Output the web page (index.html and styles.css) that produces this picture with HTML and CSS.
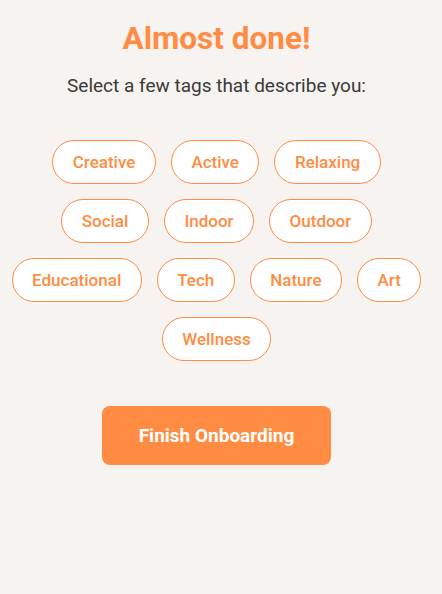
FILE: index.html
```html
<!DOCTYPE html>
<html>
<head>
<meta charset="utf-8">
<link rel="stylesheet" href="styles.css">
</head>
<body>
<main class="page">
  <h1 class="title">Almost done!</h1>
  <p class="subtitle">Select a few tags that describe you:</p>
  <div class="tags">
    <button class="tag">Creative</button>
    <button class="tag">Active</button>
    <button class="tag">Relaxing</button>
    <button class="tag">Social</button>
    <button class="tag">Indoor</button>
    <button class="tag">Outdoor</button>
    <button class="tag">Educational</button>
    <button class="tag">Tech</button>
    <button class="tag">Nature</button>
    <button class="tag">Art</button>
    <button class="tag">Wellness</button>
  </div>
  <button class="finish">Finish Onboarding</button>
</main>
</body>
</html>
```
FILE: styles.css
```css
html, body {
  margin: 0;
  padding: 0;
  background: #f7f3f0;
  font-family: Roboto, "Liberation Sans", sans-serif;
}
.page {
  width: 433px;
  box-sizing: border-box;
  display: flex;
  flex-direction: column;
  align-items: center;
  padding-top: 20px;
}
.title {
  margin: 0;
  font-size: 31.5px;
  line-height: 38px;
  font-weight: 700;
  color: #ff8c42;
}
.subtitle {
  margin: 16px 0 0;
  font-size: 19px;
  line-height: 24px;
  color: #3a3a3a;
}
.tags {
  margin-top: 34px;
  display: flex;
  flex-wrap: wrap;
  justify-content: center;
}
.tag {
  margin: 7.5px;
  height: 44px;
  padding: 0 19.5px;
  border: 1px solid #ff8c42;
  border-radius: 22px;
  background: #fff;
  color: #ff8c42;
  font-family: Roboto, "Liberation Sans", sans-serif;
  font-size: 17px;
  font-weight: 500;
}
.finish {
  margin-top: 37.5px;
  width: 229px;
  height: 59px;
  border: none;
  border-radius: 8px;
  background: #ff8c42;
  color: #fff;
  font-family: Roboto, "Liberation Sans", sans-serif;
  font-size: 19px;
  font-weight: 700;
}
```
